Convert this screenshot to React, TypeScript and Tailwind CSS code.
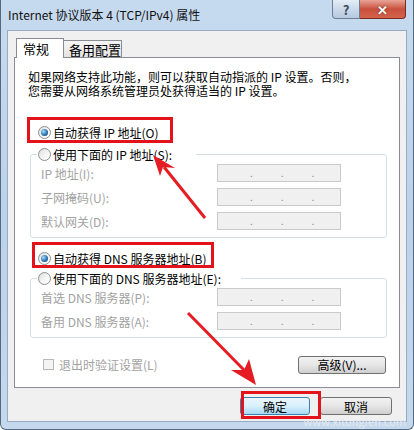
const font = "font-['Noto_Sans_CJK_SC',sans-serif]";

function Radio({ checked }: { checked?: boolean }) {
  return (
    <span className="inline-flex h-[13px] w-[13px] shrink-0 items-center justify-center rounded-full border border-[#8e8f8f] bg-linear-to-br from-[#dcdcdc] via-[#f4f4f4] to-white">
      {checked && (
        <span className="h-[7px] w-[7px] rounded-full bg-[radial-gradient(circle_at_35%_35%,#a8dcf8,#2b74b4_55%,#143c62)]" />
      )}
    </span>
  );
}

function IpBox() {
  return (
    <div className="flex h-[18px] w-[124px] items-end border border-[#cacaca] bg-[#f0f0f0] pb-[3px] text-[10px] leading-none text-[#8c8c8c]">
      <span className="ml-[32px]">.</span>
      <span className="ml-[28px]">.</span>
      <span className="ml-[28px]">.</span>
    </div>
  );
}

function Row({ label }: { label: string }) {
  return (
    <div className="flex h-[18px] items-center">
      <span className="w-[186px] pl-[10px] text-[#a2a2a2]">{label}</span>
      <IpBox />
    </div>
  );
}

function Group({ legend, rows, pad }: { legend: string; rows: string[]; pad: string }) {
  return (
    <fieldset className="ml-[15px] w-[357px] rounded-[3px] border border-[#d5dfe5] px-0 pb-[7px]">
      <legend className={`ml-[6px] flex h-[16px] items-center gap-[2px] pl-[1px] ${pad}`}>
        <Radio />
        <span>{legend}</span>
      </legend>
      <div className="flex flex-col gap-[6px] pt-[2px]">
        {rows.map((r) => (
          <Row key={r} label={r} />
        ))}
      </div>
    </fieldset>
  );
}

function Button({ text, primary, w }: { text: string; primary?: boolean; w: string }) {
  return (
    <div
      className={`flex h-[18px] ${w} items-center justify-center rounded-[3px] border ${
        primary
          ? "border-[#3c7fb1] bg-linear-to-b from-[#eaf6fd] via-[#d9f0fc] to-[#a7d9f5]"
          : "border-[#707070] bg-linear-to-b from-[#f2f2f2] via-[#e6e6e6] to-[#cfcfcf]"
      } text-[12px] text-black`}
    >
      {text}
    </div>
  );
}

export default function App() {
  return (
    <div className={`relative h-[430px] w-[414px] overflow-hidden ${font} text-[12px] leading-[13px] text-black`}>
      <div className="flex h-full w-full flex-col rounded-b-[6px] border-x border-b border-[#56697f] bg-linear-to-b from-[#c6daef] via-[#bcd2ea] to-[#c4d8ee]">
        {/* title bar */}
        <div className="flex h-[30px] shrink-0 items-start justify-between">
          <span className="pl-[7px] pt-[8px] text-[12px] leading-[14px] text-[#111]">
            Internet 协议版本 4 (TCP/IPv4) 属性
          </span>
          <div className="mr-[7px] flex h-[19px]">
            <div className="flex w-[28px] items-center justify-center rounded-bl-[4px] border border-t-0 border-[#6d7f95] bg-linear-to-b from-[#e4edf7] via-[#cbd9ea] to-[#b6c9df] text-[13px] font-bold text-[#3b4a5c]">
              ?
            </div>
            <div className="flex w-[46px] items-center justify-center rounded-br-[4px] border border-l-0 border-t-0 border-[#7a2a20] bg-linear-to-b from-[#e8a497] via-[#c9503d] to-[#d4634c] text-[13px] font-bold text-white [text-shadow:0_0_2px_#5a1a10]">
              ✕
            </div>
          </div>
        </div>

        {/* body */}
        <div className="mx-[6px] mb-[7px] flex flex-1 flex-col border border-[#97abc3] bg-[#f0f0f0] px-[6px] pt-[7px]">
          <div className="flex h-[19px] items-end">
            <div className="relative z-10 -mb-px ml-[2px] flex h-[20px] w-[48px] items-center border border-b-0 border-[#898c95] bg-white pl-[6px] text-[13px]">
              常规
            </div>
            <div className="flex h-[17px] w-[58px] items-center border border-b-0 border-l-0 border-[#898c95] bg-linear-to-b from-[#f6f6f6] to-[#e3e3e3] pl-[5px] text-[13px]">
              备用配置
            </div>
          </div>

          <div className="flex h-[331px] flex-col border border-[#898c95] bg-white">
            <p className="mt-[12px] pl-[13px] leading-[14px]">
              如果网络支持此功能，则可以获取自动指派的 IP 设置。否则，
              <br />
              您需要从网络系统管理员处获得适当的 IP 设置。
            </p>

            <div className="mt-[24px] flex h-[20px] items-center gap-[2px] pl-[23px]">
              <Radio checked />
              <span>自动获得 IP 地址(O)</span>
            </div>

            <div className="mt-[4px]">
              <Group legend="使用下面的 IP 地址(S):" rows={["IP 地址(I):", "子网掩码(U):", "默认网关(D):"]} pad="pr-[24px]" />
            </div>

            <div className="mt-[10px] flex h-[20px] items-center gap-[2px] pl-[23px]">
              <Radio checked />
              <span>自动获得 DNS 服务器地址(B)</span>
            </div>

            <div className="mt-[2px]">
              <Group legend="使用下面的 DNS 服务器地址(E):" rows={["首选 DNS 服务器(P):", "备用 DNS 服务器(A):"]} pad="pr-[20px]" />
            </div>

            <div className="mt-[17px] flex h-[19px] items-center justify-between pl-[28px] pr-[13px]">
              <div className="flex items-center gap-[5px] text-[#a2a2a2]">
                <span className="h-[11px] w-[11px] border border-[#b8b8b8] bg-[#f4f4f4]" />
                <span>退出时验证设置(L)</span>
              </div>
              <Button text="高级(V)..." w="w-[88px]" />
            </div>
          </div>

          <div className="mt-[9px] flex justify-end gap-[10px] pr-[8px]">
            <Button text="确定" primary w="w-[70px]" />
            <Button text="取消" w="w-[72px]" />
          </div>
        </div>
      </div>

      {/* annotations */}
      <div className="pointer-events-none absolute left-[27px] top-[117px] h-[26px] w-[146px] border-[3px] border-[#e3131b]" />
      <div className="pointer-events-none absolute left-[32px] top-[242px] h-[26px] w-[182px] border-[3px] border-[#e3131b]" />
      <div className="pointer-events-none absolute left-[241px] top-[391px] h-[28px] w-[80px] border-[3px] border-[#e3131b]" />
      <svg className="pointer-events-none absolute left-0 top-0" width="414" height="430">
        <line x1="205" y1="218" x2="164" y2="167" stroke="#e51c23" strokeWidth="3" />
        <polygon points="153,155 175,168 163,167 160,176" fill="#e51c23" />
        <line x1="188" y1="313" x2="244" y2="370" stroke="#e51c23" strokeWidth="3" />
        <polygon points="256,385 231,370 244,370 249,359" fill="#e51c23" />
      </svg>
      <span className="pointer-events-none absolute bottom-[2px] right-[8px] text-[11px] text-[#e6ebf0]">www.xitongfen.com</span>
    </div>
  );
}
